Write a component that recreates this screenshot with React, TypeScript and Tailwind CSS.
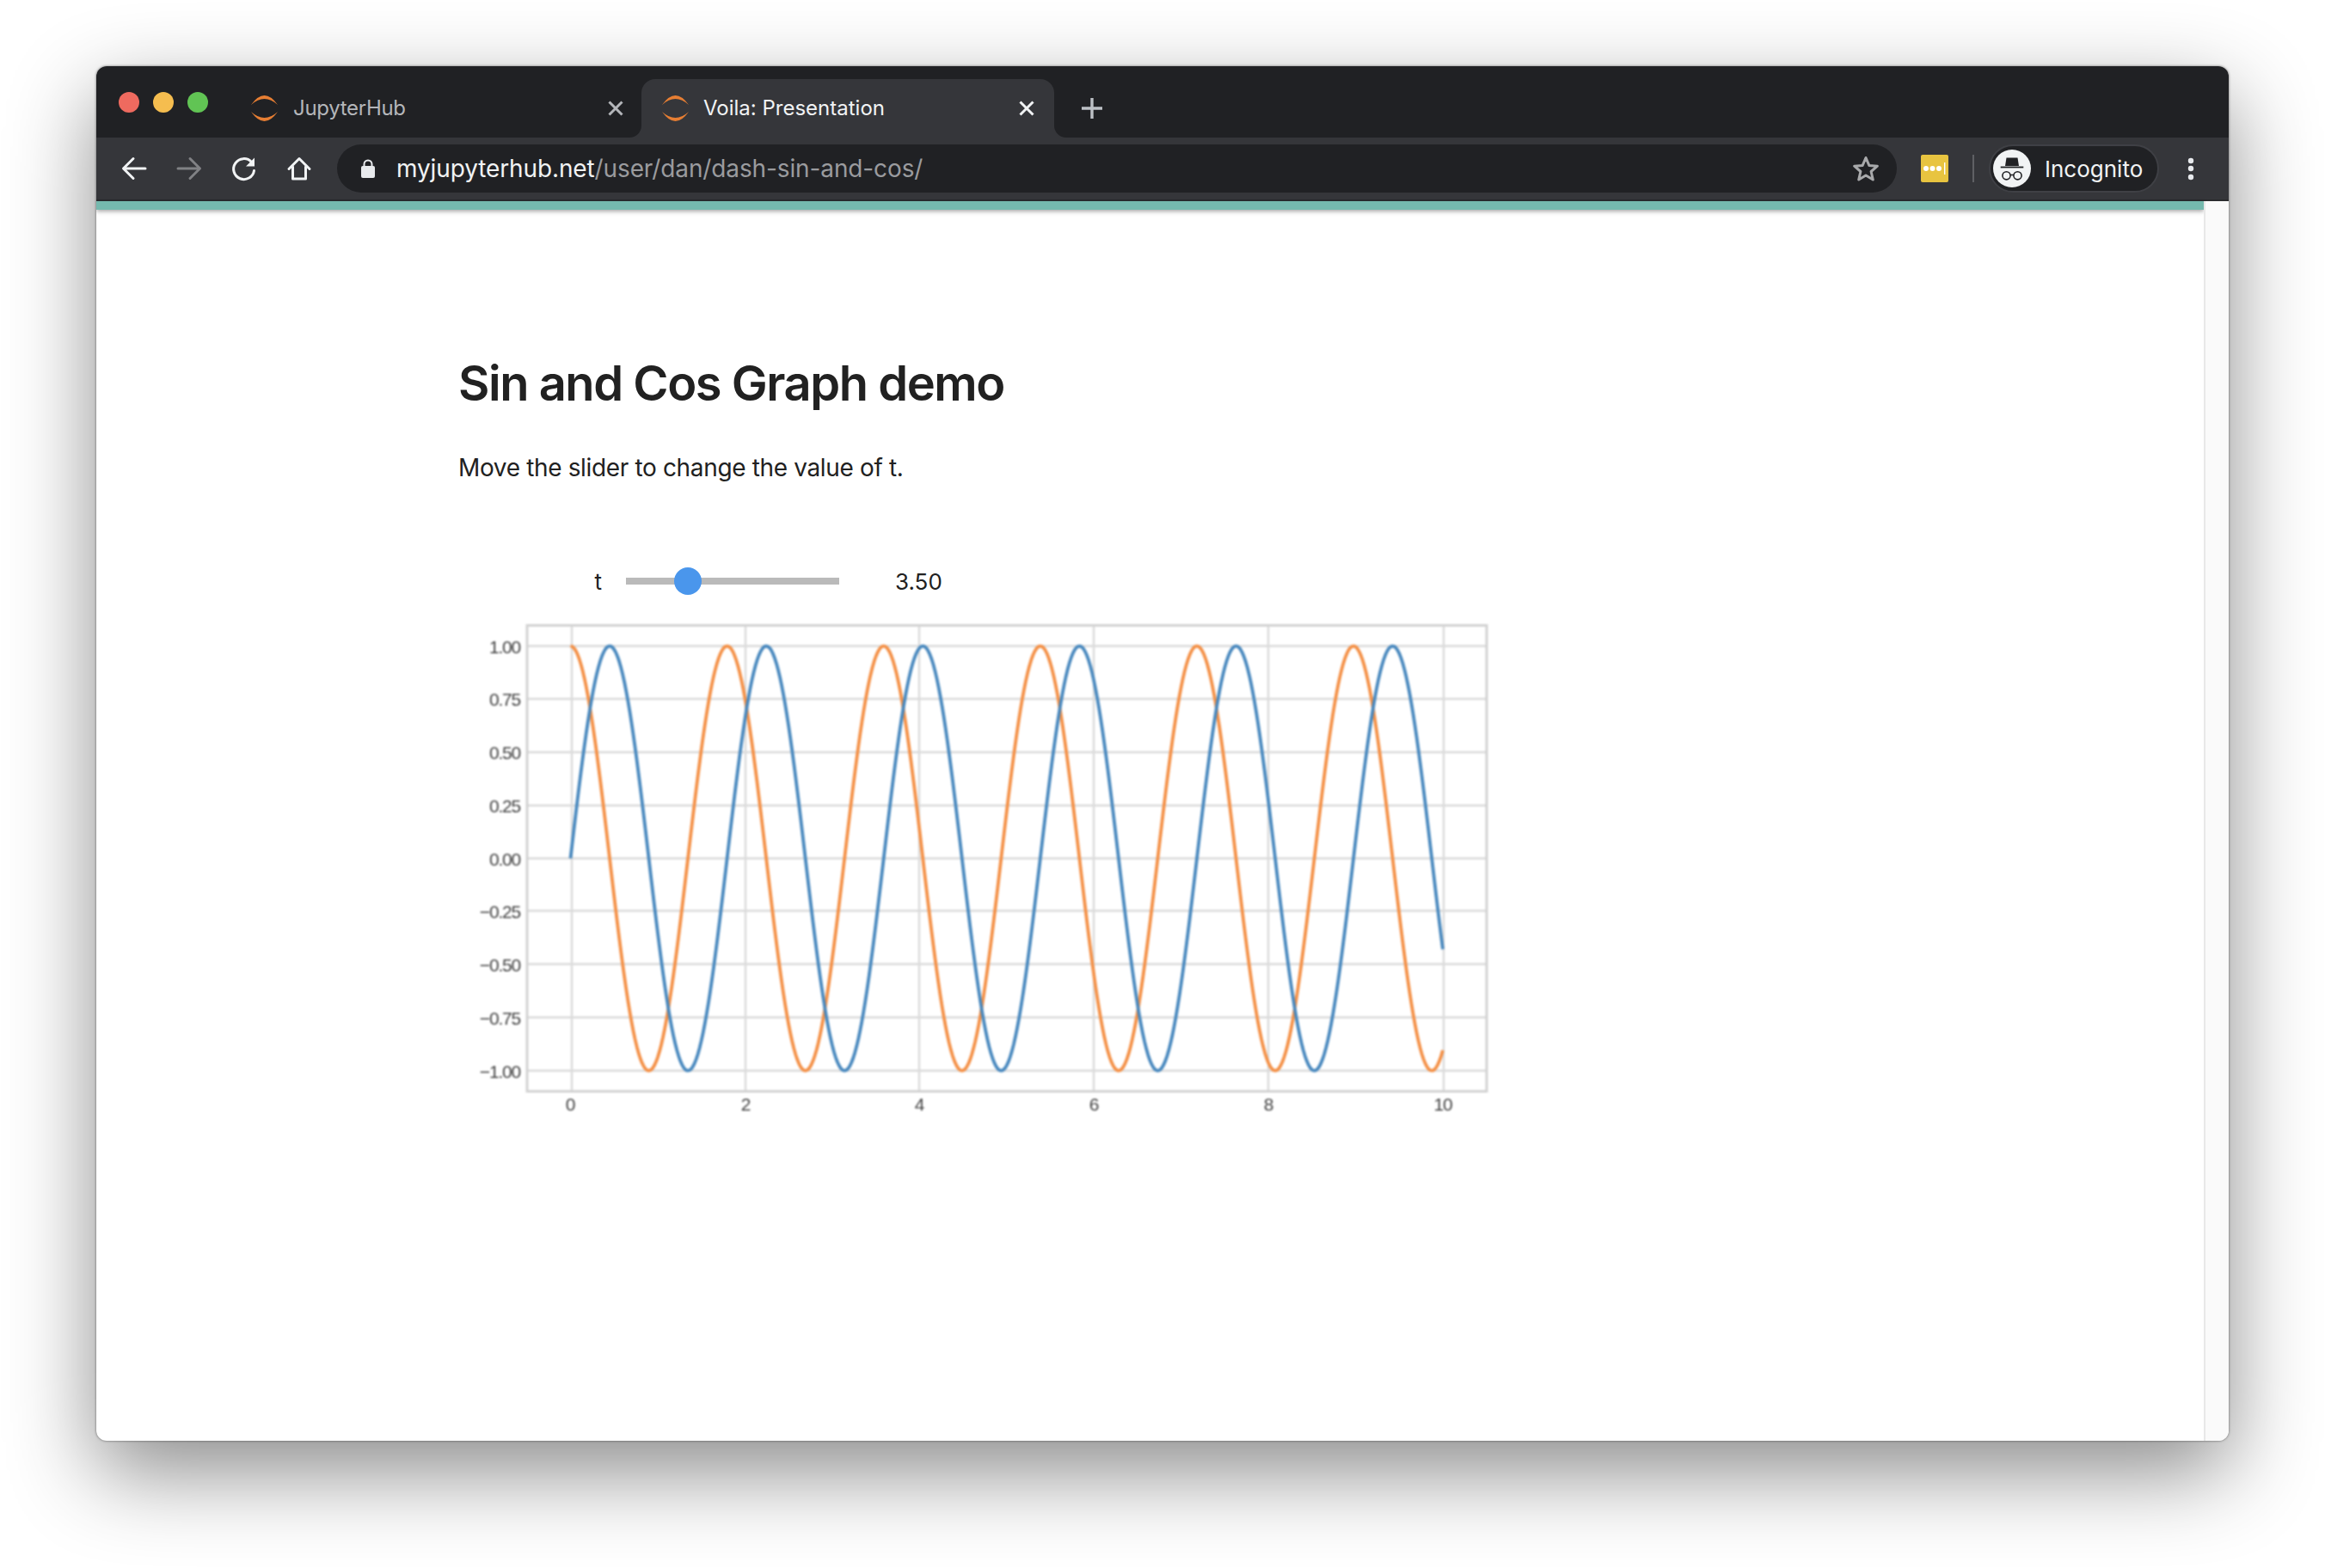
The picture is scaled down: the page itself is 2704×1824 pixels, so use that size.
import React from "react";

const FONT = "font-['Inter','Liberation_Sans',sans-serif]";

function Favicon() {
  return (
    <svg width="31" height="30" viewBox="0 0 31 30" className="shrink-0">
      <path d="M0 11 Q15.5 -11 31 11 Q15.5 -3 0 11 Z" fill="#e67e33" />
      <path d="M0 19 Q15.5 41 31 19 Q15.5 33 0 19 Z" fill="#e67e33" />
    </svg>
  );
}

function CloseIcon({ color }: { color: string }) {
  return (
    <svg width="24" height="24" viewBox="0 0 24 24" className="shrink-0">
      <path d="M4.5 4.5 L19.5 19.5 M19.5 4.5 L4.5 19.5" stroke={color} strokeWidth="3" fill="none" />
    </svg>
  );
}

function Back() {
  return (
    <svg width="36" height="36" viewBox="0 0 36 36">
      <path d="M31 18 H6 M17 6.5 L5.5 18 L17 29.5" stroke="#f1f3f4" strokeWidth="3" fill="none" strokeLinecap="round" strokeLinejoin="round" />
    </svg>
  );
}

function Forward() {
  return (
    <svg width="36" height="36" viewBox="0 0 36 36">
      <path d="M5 18 H30 M19 6.5 L30.5 18 L19 29.5" stroke="#808184" strokeWidth="3" fill="none" strokeLinecap="round" strokeLinejoin="round" />
    </svg>
  );
}

function Reload() {
  return (
    <svg width="36" height="36" viewBox="0 0 36 36">
      <path d="M26.5 10.5 A12 12 0 1 0 29.5 20.5" stroke="#f1f3f4" strokeWidth="3" fill="none" strokeLinecap="round" />
      <path d="M30 5.5 V15.5 H20 Z" fill="#f1f3f4" />
    </svg>
  );
}

function Home() {
  return (
    <svg width="36" height="36" viewBox="0 0 36 36">
      <path d="M6 18.5 L18 6.5 L30 18.5 M10.5 16 V30 H25.5 V16" stroke="#f1f3f4" strokeWidth="3" fill="none" strokeLinecap="round" strokeLinejoin="round" />
    </svg>
  );
}

function Lock() {
  return (
    <svg width="16" height="22" viewBox="0 0 16 22" className="shrink-0">
      <path d="M3.5 9 V6 A4.5 4.5 0 0 1 12.5 6 V9" stroke="#e8eaed" strokeWidth="2" fill="none" />
      <rect x="0" y="8" width="16" height="14" rx="2" fill="#e8eaed" />
    </svg>
  );
}

function Star() {
  return (
    <svg width="32" height="32" viewBox="0 0 32 32" className="shrink-0">
      <path d="M16 3.5 L19.8 12.4 L29.4 13.2 L22.1 19.5 L24.3 29 L16 24 L7.7 29 L9.9 19.5 L2.6 13.2 L12.2 12.4 Z" stroke="#a8a9ab" strokeWidth="3" fill="none" strokeLinejoin="round" />
    </svg>
  );
}

function LastPass() {
  return (
    <div className="ml-[28px] flex h-[32px] w-[32px] shrink-0 items-center justify-center rounded-[2px] bg-[#e8c440]">
      <svg width="28" height="14" viewBox="0 0 28 14">
        <circle cx="4" cy="7" r="3" fill="#ffffff" />
        <circle cx="11.5" cy="7" r="3" fill="#ffffff" />
        <circle cx="19" cy="7" r="3" fill="#ffffff" />
        <rect x="25" y="0" width="1.4" height="14" fill="#ffffff" />
      </svg>
    </div>
  );
}

function IncognitoFace() {
  return (
    <svg width="44" height="44" viewBox="0 0 44 44" className="shrink-0">
      <circle cx="22" cy="22" r="22" fill="#f1f3f4" />
      <path d="M15.5 9.5 H28.5 L30 19 H14 Z" fill="#202124" />
      <rect x="8.7" y="19.6" width="26.6" height="1.8" fill="#202124" />
      <circle cx="15.5" cy="30.3" r="4.6" stroke="#202124" strokeWidth="1.6" fill="none" />
      <circle cx="28.5" cy="30.3" r="4.6" stroke="#202124" strokeWidth="1.6" fill="none" />
      <path d="M20 29.5 H24" stroke="#202124" strokeWidth="1.6" />
    </svg>
  );
}

function Kebab() {
  return (
    <svg width="20" height="32" viewBox="0 0 20 32" className="ml-[27px] shrink-0">
      <circle cx="10" cy="7" r="3.2" fill="#e8eaed" />
      <circle cx="10" cy="16" r="3.2" fill="#e8eaed" />
      <circle cx="10" cy="26" r="3.2" fill="#e8eaed" />
    </svg>
  );
}

function curve(fn: (t: number) => number) {
  const pts: string[] = [];
  for (let i = 0; i <= 500; i++) {
    const t = (i / 500) * 10;
    pts.push(`${(663.5 + 101.45 * t).toFixed(2)},${(998.5 - 247 * fn(t)).toFixed(2)}`);
  }
  return "M" + pts.join(" L");
}

const yTicks: [string, number][] = [
  ["1.00", 751.5],
  ["0.75", 813],
  ["0.50", 875],
  ["0.25", 937],
  ["0.00", 998.5],
  ["−0.25", 1059.5],
  ["−0.50", 1121.5],
  ["−0.75", 1183.5],
  ["−1.00", 1245.5],
];
const xTicks: [string, number, number][] = [
  ["0", 665, 663],
  ["2", 867, 867],
  ["4", 1069, 1069],
  ["6", 1272, 1272],
  ["8", 1475, 1475],
  ["10", 1679, 1678],
];

function Chart() {
  return (
    <svg
      width="1207"
      height="596"
      viewBox="533 716 1207 596"
      className="mt-[20px] block blur-[0.8px]"
      style={{ fontFamily: "'Liberation Sans', sans-serif" }}
    >
      {yTicks.map(([l, y]) => (
        <g key={l}>
          <line x1="613" x2="1729" y1={y} y2={y} stroke="#dadada" strokeWidth="2.4" />
          <text x="605" y={y + 8} textAnchor="end" fontSize="21" letterSpacing="-1.2" fill="#404040">
            {l}
          </text>
        </g>
      ))}
      {xTicks.map(([l, x, lx]) => (
        <g key={l}>
          <line x1={x} x2={x} y1="727" y2="1269" stroke="#dadada" strokeWidth="2.4" />
          <text x={lx} y="1292" textAnchor="middle" fontSize="21" letterSpacing="-1.2" fill="#404040">
            {l}
          </text>
        </g>
      ))}
      <rect x="613" y="727.5" width="1116" height="542" fill="none" stroke="#d0d0d0" strokeWidth="2.8" />
      <path d={curve((t) => Math.cos(3.5 * t))} fill="none" stroke="#f49046" strokeWidth="3.8" strokeLinejoin="round" />
      <path d={curve((t) => Math.sin(3.5 * t))} fill="none" stroke="#4888be" strokeWidth="3.8" strokeLinejoin="round" />
    </svg>
  );
}

export default function App() {
  return (
    <div className={`min-h-[1824px] bg-white pl-[112px] pt-[77px] ${FONT}`}>
      <div className="flex h-[1599px] w-[2480px] flex-col overflow-hidden rounded-[12px] bg-white shadow-[0_36px_100px_rgba(0,0,0,0.46),0_0_3px_rgba(0,0,0,0.55)]">
        {/* Tab strip */}
        <div className="flex h-[83px] shrink-0 bg-[#202124] pl-[26px] pt-[15px]">
          <div className="mt-[15px] flex gap-[16px] self-start">
            <div className="h-[24px] w-[24px] rounded-full bg-[#ee6a5f]" />
            <div className="h-[24px] w-[24px] rounded-full bg-[#f5bd4f]" />
            <div className="h-[24px] w-[24px] rounded-full bg-[#61c454]" />
          </div>
          <div className="flex w-[504px] items-center pl-[50px] pr-[18px]">
            <Favicon />
            <span className="ml-[18px] text-[24px] tracking-[-0.3px] text-[#b4b6ba]">JupyterHub</span>
            <span className="ml-auto flex">
              <CloseIcon color="#b4b6ba" />
            </span>
          </div>
          <div className="relative flex w-[480px] items-center rounded-t-[16px] bg-[#35363a] pl-[24px] pr-[20px]">
            <div className="absolute bottom-0 left-[-14px] h-[14px] w-[14px] bg-[#35363a]">
              <div className="h-full w-full rounded-br-[14px] bg-[#202124]" />
            </div>
            <div className="absolute bottom-0 right-[-14px] h-[14px] w-[14px] bg-[#35363a]">
              <div className="h-full w-full rounded-bl-[14px] bg-[#202124]" />
            </div>
            <Favicon />
            <span className="ml-[17px] text-[24px] text-[#f1f3f4]">Voila: Presentation</span>
            <span className="ml-auto flex">
              <CloseIcon color="#f1f3f4" />
            </span>
          </div>
          <div className="ml-[32px] flex items-center">
            <svg width="24" height="24" viewBox="0 0 24 24">
              <path d="M12 0 V24 M0 12 H24" stroke="#bdc1c6" strokeWidth="3.4" strokeLinecap="round" />
            </svg>
          </div>
        </div>

        {/* Toolbar */}
        <div className="flex h-[74px] shrink-0 items-center border-b-2 border-[#2a2b2e] bg-[#35363a] pl-[26px] pr-[34px]">
          <div className="flex gap-[28px]">
            <Back />
            <Forward />
            <Reload />
            <Home />
          </div>
          <div className="ml-[26px] flex h-[56px] flex-1 items-center rounded-full bg-[#202124] pl-[28px] pr-[20px]">
            <Lock />
            <span className="ml-[25px] text-[28px] tracking-[-0.12px] text-[#f1f3f4]">
              myjupyterhub.net<span className="text-[#9a9b9e]">/user/dan/dash-sin-and-cos/</span>
            </span>
            <span className="ml-auto flex">
              <Star />
            </span>
          </div>
          <LastPass />
          <div className="ml-[28px] h-[32px] w-[2px] shrink-0 bg-[#5f6064]" />
          <div className="ml-[17px] flex h-[56px] w-[198px] shrink-0 items-center rounded-full border-2 border-[#3f4045] bg-[#202124] pl-[3px]">
            <IncognitoFace />
            <span className="ml-[16px] text-[26px] text-[#f1f3f4]">Incognito</span>
          </div>
          <Kebab />
        </div>

        {/* Page */}
        <div className="flex min-h-0 flex-1">
          <main className="flex-1">
            <div className="h-[10px] bg-[#75b9ae] shadow-[0_2px_5px_rgba(0,0,0,0.35)]" />
            <div className="pl-[421px] pt-[170px]">
              <h1 className="text-[56px] font-semibold leading-[64px] tracking-[-1.45px] text-[#212121]">Sin and Cos Graph demo</h1>
              <p className="mt-[46px] text-[28px] leading-[40px] tracking-[-0.35px] text-[#212121]">Move the slider to change the value of t.</p>
              <div className="mt-[92px] flex h-[40px] items-center text-[26px] text-[#212121]">
                <span className="w-[167px] text-right">t</span>
                <div className="relative ml-[28px] h-[8px] w-[248px] bg-[#bababa]">
                  <div className="absolute left-[56px] top-[-12px] h-[32px] w-[32px] rounded-full bg-[#4a96ec]" />
                </div>
                <span className="ml-[65px]">3.50</span>
              </div>
              <Chart />
            </div>
          </main>
          <div className="w-[29px] shrink-0 border-l-2 border-[#e8e8e8] bg-[#fafafa]" />
        </div>
      </div>
    </div>
  );
}
